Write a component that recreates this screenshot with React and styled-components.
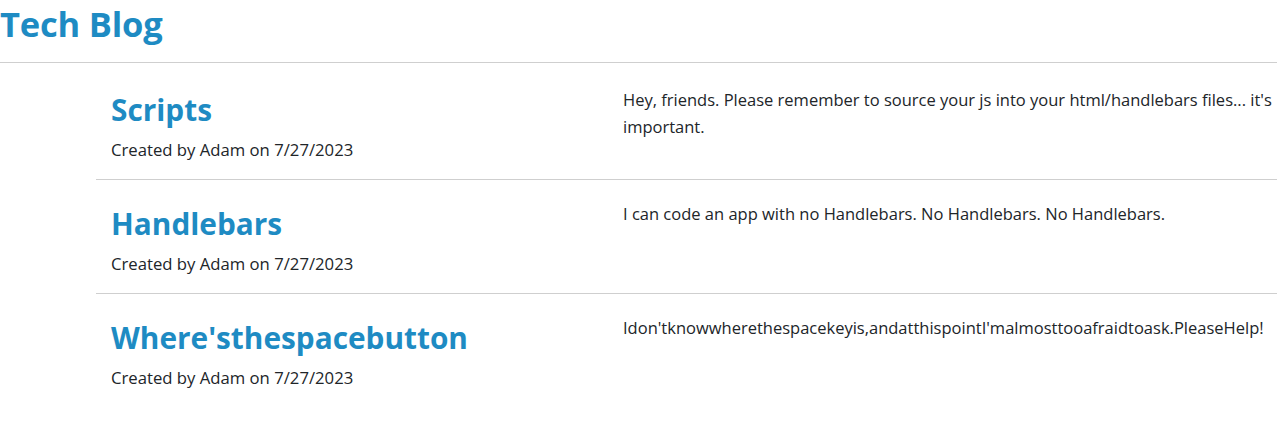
import styled, { createGlobalStyle } from 'styled-components'

const posts = [
  {
    id: 1,
    title: 'Scripts',
    author: 'Adam',
    date: '7/27/2023',
    body: "Hey, friends. Please remember to source your js into your html/handlebars files... it's important.",
  },
  {
    id: 2,
    title: 'Handlebars',
    author: 'Adam',
    date: '7/27/2023',
    body: 'I can code an app with no Handlebars. No Handlebars. No Handlebars.',
  },
  {
    id: 3,
    title: "Where'sthespacebutton",
    author: 'Adam',
    date: '7/27/2023',
    body: "Idon'tknowwherethespacekeyis,andatthispointI'malmosttooafraidtoask.PleaseHelp!",
  },
]

export default function App() {
  return (
    <>
      <GlobalStyle />
      <Header>
        <Brand>Tech Blog</Brand>
      </Header>
      <PostList>
        {posts.map((post) => (
          <PostRow key={post.id}>
            <PostMeta>
              <PostTitle>{post.title}</PostTitle>
              <Byline>Created by {post.author} on {post.date}</Byline>
            </PostMeta>
            <PostBody>{post.body}</PostBody>
          </PostRow>
        ))}
      </PostList>
    </>
  )
}

const GlobalStyle = createGlobalStyle`
  body {
    margin: 0;
    background: #fff;
    color: #212529;
    font-family: "Open Sans", "Noto Sans", sans-serif;
    overflow: hidden;
  }
`

const Header = styled.header`
  border-bottom: 1px solid #cfcfcf;
  height: 63px;
  box-sizing: border-box;
`

const Brand = styled.h1`
  margin: 0;
  padding-top: 2px;
  font-size: 34.5px;
  line-height: 44px;
  font-weight: 700;
  color: #1e8bc3;
  letter-spacing: -0.2px;
`

const PostList = styled.main`
  margin-left: 96px;
`

const PostRow = styled.article`
  display: flex;
  padding: 24px 0 17px;
  &:first-child {
    padding-top: 27px;
  }
  & + & {
    border-top: 1px solid #cfcfcf;
  }
`

const PostMeta = styled.div`
  width: 512px;
  flex: none;
  padding: 0 15px;
  box-sizing: border-box;
`

const PostTitle = styled.h2`
  margin: 0 0 8px;
  font-size: 29.8px;
  line-height: 40px;
  font-weight: 700;
  color: #1e8bc3;
`

const Byline = styled.p`
  margin: 0;
  font-size: 16.7px;
  line-height: 24px;
`

const PostBody = styled.p`
  flex: 1;
  margin: -4px 0 0;
  padding: 0 0 0 15px;
  font-size: 16.5px;
  line-height: 27px;
`
